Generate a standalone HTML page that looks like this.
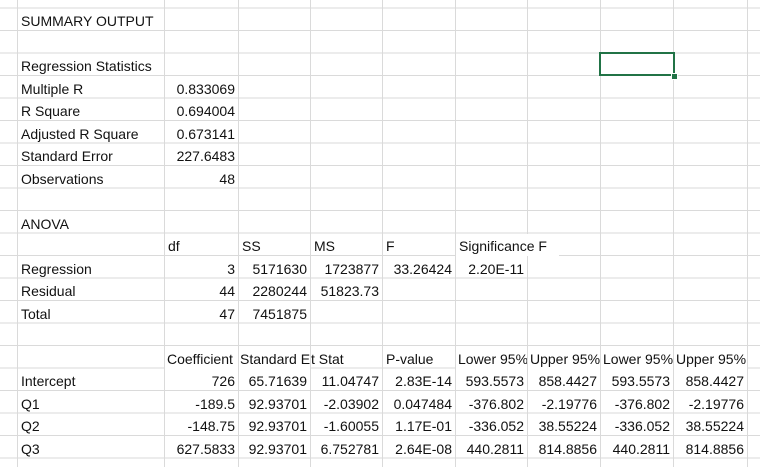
<!DOCTYPE html>
<html><head><meta charset="utf-8"><style>
html,body{margin:0;padding:0;background:#fff;}
#s{position:relative;width:760px;height:467px;overflow:hidden;font-family:"Liberation Sans",Arial,sans-serif;font-size:14px;color:#111;
background-image:repeating-linear-gradient(to bottom,transparent 0,transparent 7.5px,#dadada 7.5px,#dadada 8.5px,transparent 8.5px,transparent 22.5px);}
.v{position:absolute;top:0;width:1px;height:467px;background:#dadada;}
.c{position:absolute;height:22px;line-height:24px;white-space:nowrap;background:none;}
.l{padding-left:3px;text-align:left;}
.r{padding-right:3px;text-align:right;box-sizing:border-box;}
.o{overflow:hidden;box-sizing:border-box;background:#fff;}
#sel{position:absolute;left:599px;top:52px;width:72px;height:20px;border:2px solid #217346;}
#h{position:absolute;left:671px;top:73px;width:5px;height:5px;background:#217346;border:1px solid #fff;}
</style></head><body><div id="s">
<div class="v" style="left:17px"></div><div class="v" style="left:164px"></div><div class="v" style="left:238px"></div><div class="v" style="left:310px"></div><div class="v" style="left:382px"></div><div class="v" style="left:455px"></div><div class="v" style="left:527px"></div><div class="v" style="left:600px"></div><div class="v" style="left:673px"></div><div class="v" style="left:747px"></div>

<div class="c l" style="left:18px;top:9px">SUMMARY OUTPUT</div>
<div class="c l" style="left:18px;top:54px">Regression Statistics</div>
<div class="c l" style="left:18px;top:77px">Multiple R</div>
<div class="c r" style="left:165px;width:73px;top:77px">0.833069</div>
<div class="c l" style="left:18px;top:99px">R Square</div>
<div class="c r" style="left:165px;width:73px;top:99px">0.694004</div>
<div class="c l" style="left:18px;top:122px">Adjusted R Square</div>
<div class="c r" style="left:165px;width:73px;top:122px">0.673141</div>
<div class="c l" style="left:18px;top:144px">Standard Error</div>
<div class="c r" style="left:165px;width:73px;top:144px">227.6483</div>
<div class="c l" style="left:18px;top:167px">Observations</div>
<div class="c r" style="left:165px;width:73px;top:167px">48</div>
<div class="c l" style="left:18px;top:212px">ANOVA</div>

<div class="c l" style="left:165px;top:234px">df</div>
<div class="c l" style="left:239px;top:234px">SS</div>
<div class="c l" style="left:311px;top:234px">MS</div>
<div class="c l" style="left:383px;top:234px">F</div>
<div class="c l" style="left:456px;top:234px;width:100px;background:#fff">Significance F</div>

<div class="c l" style="left:18px;top:257px">Regression</div>
<div class="c r" style="left:165px;width:73px;top:257px">3</div>
<div class="c r" style="left:239px;width:71px;top:257px">5171630</div>
<div class="c r" style="left:311px;width:71px;top:257px">1723877</div>
<div class="c r" style="left:383px;width:72px;top:257px">33.26424</div>
<div class="c r" style="left:456px;width:71px;top:257px">2.20E-11</div>
<div class="c l" style="left:18px;top:279px">Residual</div>
<div class="c r" style="left:165px;width:73px;top:279px">44</div>
<div class="c r" style="left:239px;width:71px;top:279px">2280244</div>
<div class="c r" style="left:311px;width:71px;top:279px">51823.73</div>
<div class="c l" style="left:18px;top:302px">Total</div>
<div class="c r" style="left:165px;width:73px;top:302px">47</div>
<div class="c r" style="left:239px;width:71px;top:302px">7451875</div>

<div class="c o" style="left:165px;width:73px;top:347px;padding-left:2px">Coefficient</div>
<div class="c o" style="left:239px;width:71px;top:347px;padding-left:1px">Standard Error</div>
<div class="c l" style="left:310px;top:347px;padding-left:1px">t Stat</div>
<div class="c l" style="left:383px;top:347px">P-value</div>
<div class="c o" style="left:456px;width:71px;top:347px;padding-left:2px">Lower 95%</div>
<div class="c o" style="left:528px;width:72px;top:347px;padding-left:2px">Upper 95%</div>
<div class="c o" style="left:601px;width:72px;top:347px;padding-left:2px">Lower 95%</div>
<div class="c o" style="left:674px;width:73px;top:347px;padding-left:2px">Upper 95%</div>

<div class="c l" style="left:18px;top:369px">Intercept</div>
<div class="c r" style="left:165px;width:73px;top:369px">726</div>
<div class="c r" style="left:239px;width:71px;top:369px">65.71639</div>
<div class="c r" style="left:311px;width:71px;top:369px">11.04747</div>
<div class="c r" style="left:383px;width:72px;top:369px">2.83E-14</div>
<div class="c r" style="left:456px;width:71px;top:369px">593.5573</div>
<div class="c r" style="left:528px;width:72px;top:369px">858.4427</div>
<div class="c r" style="left:601px;width:72px;top:369px">593.5573</div>
<div class="c r" style="left:674px;width:73px;top:369px">858.4427</div>

<div class="c l" style="left:18px;top:392px">Q1</div>
<div class="c r" style="left:165px;width:73px;top:392px">-189.5</div>
<div class="c r" style="left:239px;width:71px;top:392px">92.93701</div>
<div class="c r" style="left:311px;width:71px;top:392px">-2.03902</div>
<div class="c r" style="left:383px;width:72px;top:392px">0.047484</div>
<div class="c r" style="left:456px;width:71px;top:392px">-376.802</div>
<div class="c r" style="left:528px;width:72px;top:392px">-2.19776</div>
<div class="c r" style="left:601px;width:72px;top:392px">-376.802</div>
<div class="c r" style="left:674px;width:73px;top:392px">-2.19776</div>

<div class="c l" style="left:18px;top:414px">Q2</div>
<div class="c r" style="left:165px;width:73px;top:414px">-148.75</div>
<div class="c r" style="left:239px;width:71px;top:414px">92.93701</div>
<div class="c r" style="left:311px;width:71px;top:414px">-1.60055</div>
<div class="c r" style="left:383px;width:72px;top:414px">1.17E-01</div>
<div class="c r" style="left:456px;width:71px;top:414px">-336.052</div>
<div class="c r" style="left:528px;width:72px;top:414px">38.55224</div>
<div class="c r" style="left:601px;width:72px;top:414px">-336.052</div>
<div class="c r" style="left:674px;width:73px;top:414px">38.55224</div>

<div class="c l" style="left:18px;top:437px">Q3</div>
<div class="c r" style="left:165px;width:73px;top:437px">627.5833</div>
<div class="c r" style="left:239px;width:71px;top:437px">92.93701</div>
<div class="c r" style="left:311px;width:71px;top:437px">6.752781</div>
<div class="c r" style="left:383px;width:72px;top:437px">2.64E-08</div>
<div class="c r" style="left:456px;width:71px;top:437px">440.2811</div>
<div class="c r" style="left:528px;width:72px;top:437px">814.8856</div>
<div class="c r" style="left:601px;width:72px;top:437px">440.2811</div>
<div class="c r" style="left:674px;width:73px;top:437px">814.8856</div>

<div id="sel"></div><div id="h"></div>
</div></body></html>
